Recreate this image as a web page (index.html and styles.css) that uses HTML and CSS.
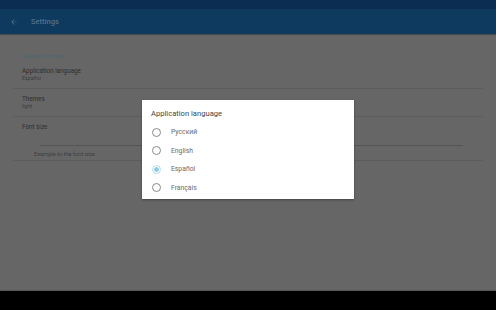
FILE: index.html
```html
<!DOCTYPE html>
<html lang="en">
  <head>
    <meta charset="UTF-8" />
    <title>Settings</title>
    <link rel="stylesheet" href="styles.css">
  </head>
  <body>
    <div class="screen">
      <div class="status"></div>
      <div class="toolbar">
        <svg class="back" width="8" height="8" viewBox="0 0 24 24">
          <path d="M20 11H7.83l5.59-5.59L12 4l-8 8 8 8 1.41-1.41L7.83 13H20v-2z" fill="#55708a" />
        </svg>
        <span class="title">Settings</span>
      </div>

      <div class="content">
        <div class="group">General Settings</div>

        <div class="pref">
          <div class="name">Application language</div>
          <div class="value">Español</div>
        </div>

        <div class="pref">
          <div class="name">Themes</div>
          <div class="value">light</div>
        </div>

        <div class="pref last">
          <div class="name">Font size</div>
          <div class="track"></div>
          <div class="example">Example to the font size</div>
        </div>

        <div class="dialog">
          <div class="dialog-title">Application language</div>
          <div class="option"><span class="radio"></span>Русский</div>
          <div class="option"><span class="radio"></span>English</div>
          <div class="option"><span class="radio checked"></span>Español</div>
          <div class="option"><span class="radio"></span>Français</div>
        </div>
      </div>

      <div class="navbar"></div>
    </div>
  </body>
</html>
```

FILE: styles.css
```css
body {
  margin: 0;
  font-family: Roboto, "Liberation Sans", sans-serif;
}

.screen {
  width: 496px;
  height: 310px;
  display: flex;
  flex-direction: column;
  background: #666666;
}

.status {
  height: 9px;
  background: #0b2d52;
}

.toolbar {
  height: 25px;
  display: flex;
  align-items: center;
  background: #0d3a5e;
  color: #55708a;
  box-shadow: 0 1px 1px rgba(0, 0, 0, 0.25);
}

.back {
  margin-left: 10px;
}

.title {
  margin-left: 13px;
  font-size: 7.5px;
  font-weight: 500;
}

.content {
  position: relative;
  flex: 1;
  padding: 19px 13px 0 13px;
}

.group {
  padding-left: 9px;
  font-size: 5.6px;
  line-height: 6px;
  color: #466a72;
  margin-bottom: 2px;
}

.pref {
  box-sizing: border-box;
  height: 28px;
  padding: 6px 0 0 9px;
  border-bottom: 1px solid #5c5c5c;
}

.name {
  font-size: 6.3px;
  line-height: 8px;
  color: #2e2e2e;
}

.value {
  font-size: 5.4px;
  line-height: 6px;
  color: #3e3e3e;
}

.pref.last {
  height: 44px;
}

.track {
  height: 1px;
  margin: 14px 20px 0 18px;
  background: #555555;
}

.example {
  margin: 5px 0 0 12px;
  font-size: 5.7px;
  line-height: 6px;
  color: #404040;
}

.dialog {
  position: absolute;
  left: 142px;
  top: 66px;
  width: 212px;
  height: 99px;
  background: #ffffff;
  box-shadow: 0 1px 2px rgba(0, 0, 0, 0.35);
  box-sizing: border-box;
  padding: 9px 0 0 9px;
}

.dialog-title {
  font-size: 7.6px;
  color: #444444;
  margin-bottom: 5px;
}

.option {
  display: flex;
  align-items: center;
  height: 18.5px;
  font-size: 6.8px;
  color: #6a6a6a;
}

.radio {
  width: 7px;
  height: 7px;
  border: 1px solid #8a8a8a;
  border-radius: 50%;
  margin: 0 10px 0 1px;
}

.radio.checked {
  border-color: #b5dcee;
  background: radial-gradient(circle, #8ccbe8 0 2px, #ffffff 2.6px);
}

.navbar {
  height: 19px;
  background: #000000;
  border-top: 1px solid #555555;
}
```
